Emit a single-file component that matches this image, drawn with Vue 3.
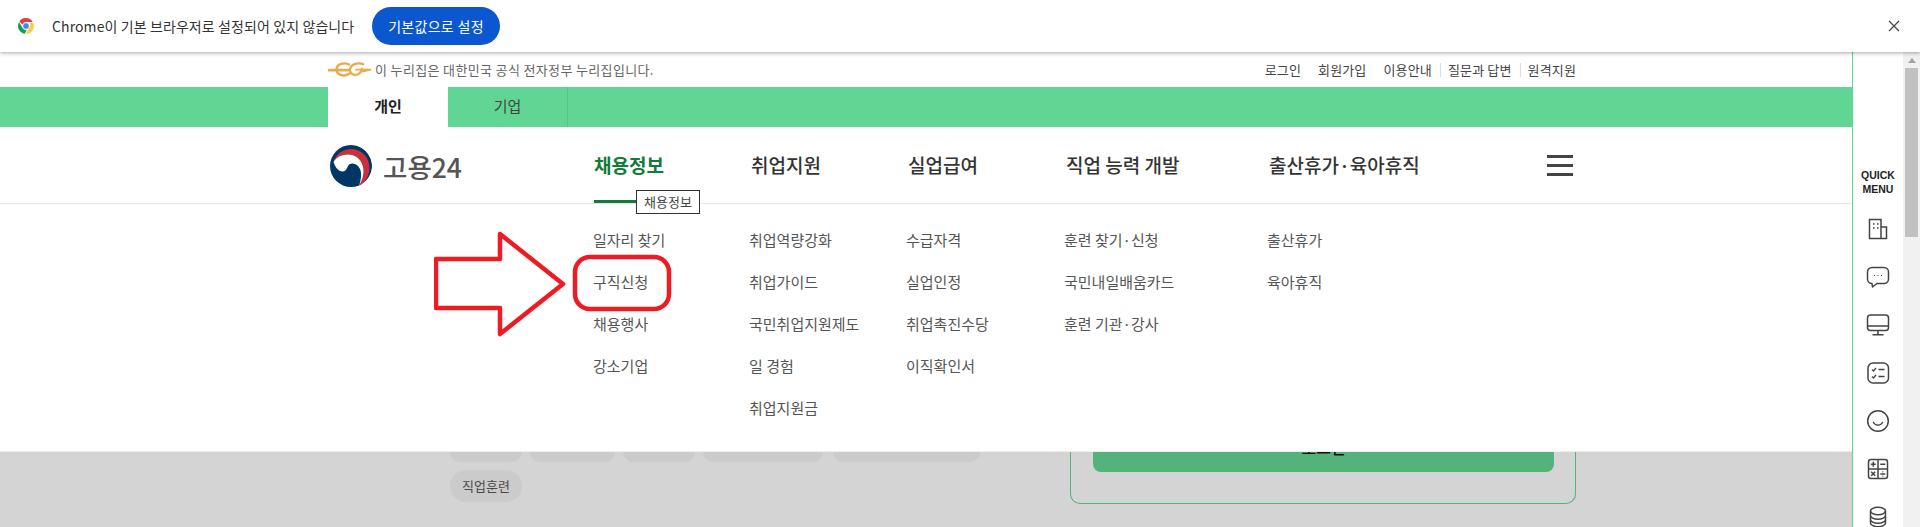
<script setup>
const links = ['로그인', '회원가입', '이용안내', '질문과 답변', '원격지원']
const columns = [
  { title: '채용정보', active: true, items: ['일자리 찾기', '구직신청', '채용행사', '강소기업'] },
  { title: '취업지원', items: ['취업역량강화', '취업가이드', '국민취업지원제도', '일 경험', '취업지원금'] },
  { title: '실업급여', items: ['수급자격', '실업인정', '취업촉진수당', '이직확인서'] },
  { title: '직업 능력 개발', items: ['훈련 찾기·신청', '국민내일배움카드', '훈련 기관·강사'] },
  { title: '출산휴가·육아휴직', items: ['출산휴가', '육아휴직'] }
]
const hiddenChips = [72, 85, 72, 120, 147]
</script>

<template>
  <div class="root">
    <div class="infobar">
      <svg class="chrome" viewBox="0 0 48 48" width="18" height="18">
        <path fill="#db4437" d="M24 3a21 21 0 0 1 18.200 10.500H24a10.500 10.500 0 0 0-9.900 7L6.500 11.200A21 21 0 0 1 24 3z" />
        <path fill="#0f9d58" d="M5.500 13.500l9.300 15.800A10.500 10.500 0 0 0 26 34.300l-5.300 10.400A21 21 0 0 1 5.500 13.500z" />
        <path fill="#ffcd40" d="M43 15a21 21 0 0 1-20 30l9.200-16A10.500 10.500 0 0 0 32.500 15z" />
        <circle cx="24" cy="24" r="8.500" fill="#4285f4" stroke="#fff" stroke-width="1.500" />
      </svg>
      <span class="info-text">Chrome이 기본 브라우저로 설정되어 있지 않습니다</span>
      <button class="default-btn">기본값으로 설정</button>
      <svg class="close" viewBox="0 0 12 12" width="12" height="12">
        <path d="M1 1l10 10M11 1L1 11" stroke="#444" stroke-width="1.2" fill="none" />
      </svg>
    </div>

    <div class="main">
      <div class="page">
        <div class="wrap gov">
          <svg class="eg" viewBox="0 0 44 16" width="44" height="16">
            <g fill="none" stroke="#e9ac4c" stroke-width="2.400" stroke-linecap="round">
              <path d="M1 8.200h19" stroke-width="2.800" />
              <path d="M21 2.500C16 .2 9 1.600 8.600 7c-.4 6 7 8.400 13 4.400" />
              <path d="M35 2.200C30 .2 22.500 2 22 7.500c-.4 6.600 9.500 8 12-.5" />
              <path d="M28 7.600h15l-9 2" stroke-width="1.800" />
            </g>
          </svg>
          <span class="gov-text">이 누리집은 대한민국 공식 전자정부 누리집입니다.</span>
          <div class="links">
            <a v-for="(l, i) in links" :key="l" class="link" :class="{ sep: i >= 3 }">{{ l }}</a>
          </div>
        </div>

        <div class="tabbar">
          <div class="wrap tabs">
            <div class="tab on">개인</div>
            <div class="tab">기업</div>
          </div>
        </div>

        <header class="header">
          <div class="wrap head-row">
            <div class="brand">
              <svg class="emblem" viewBox="0 0 42 42" width="42" height="42">
                <circle cx="21" cy="21" r="21" fill="#003764" />
                <path fill="#fff" d="M28 1.200A21 21 0 0 1 29 40.500L30 42h12V0H28z" />
                <path fill="#cd2e3a" d="M3.500 17C6 8.500 14 3.500 22 4c11 1 18 9.500 17.500 20-.5 7-4 13-10.500 17 3.500-6 5-11.500 4.500-16.500C32.500 15 26 9.500 18 9.500 11 9.500 6 12.500 3.500 17z" />
                <path fill="#fff" d="M3.500 17C6 12.500 11 9.500 18 9.500c8 0 14.500 5.500 15.500 15 .4 5-1 10.500-4.500 16.500 2-6 3-12.500 1-17-2-4.500-6.500-7-10.500-4.800C17 21 17 26.500 12.500 26.500 8.500 26.500 5 22 3.500 17z" />
              </svg>
              <span class="wordmark">고용24</span>
            </div>
            <nav class="cols nav-cols">
              <a v-for="c in columns" :key="c.title" class="nav-item" :class="{ active: c.active }">
                {{ c.title }}
                <span v-if="c.active" class="tip">{{ c.title }}</span>
              </a>
            </nav>
            <div class="burger"><i></i><i></i><i></i></div>
          </div>
        </header>

        <section class="dropdown">
          <div class="wrap drop-row">
            <div class="cols">
              <ul v-for="c in columns" :key="c.title" class="sub">
                <li v-for="it in c.items" :key="it">{{ it }}</li>
              </ul>
            </div>
          </div>
          <svg class="note" viewBox="0 0 250 110" width="250" height="110">
            <g fill="none" stroke="#ed1c24" stroke-width="4.500" stroke-linejoin="round">
              <path d="M2 28h64V3l63 50-63 50V77H2z" />
              <rect x="141" y="26" width="94" height="52" rx="15" />
            </g>
          </svg>
        </section>

        <section class="below">
          <div class="wrap below-row">
            <div class="chips">
              <div class="chip-stub-row">
                <span v-for="(w, i) in hiddenChips" :key="i" class="chip-stub" :style="{ width: w + 'px' }"></span>
              </div>
              <span class="chip">직업훈련</span>
            </div>
            <div class="card">
              <div class="card-btn"><span>로그인</span></div>
            </div>
          </div>
        </section>
      </div>

      <aside class="quick">
        <div class="quick-title">QUICK<br />MENU</div>
        <div class="quick-list">
          <svg viewBox="0 0 24 24" width="24" height="24">
            <g fill="none" stroke="#444" stroke-width="1.500">
              <path d="M3.500 2.500h11.500v19H3.500zM15 10h5.500v11.500H15" />
              <path d="M7 7h1.500M11 7h1.500M7 11h1.500M11 11h1.500" stroke-width="1.700" />
            </g>
          </svg>
          <svg viewBox="0 0 24 24" width="24" height="24">
            <g fill="none" stroke="#444" stroke-width="1.500" stroke-linejoin="round">
              <path d="M6 2.500h12a4.500 4.500 0 0 1 4.500 4.500v7a4.500 4.500 0 0 1-4.500 4.500H11L6.500 22l-.5-3.500A4.500 4.500 0 0 1 1.500 14V7A4.500 4.500 0 0 1 6 2.500z" />
              <path d="M8 10.500h1M11.500 10.500h1M15 10.500h1" stroke-width="1.200" />
            </g>
          </svg>
          <svg viewBox="0 0 24 24" width="24" height="24">
            <g fill="none" stroke="#444" stroke-width="1.500">
              <rect x="1.500" y="2" width="21" height="15.500" rx="3" />
              <path d="M1.500 13h21M12 17.500v4M6.500 21.700h11" />
            </g>
          </svg>
          <svg viewBox="0 0 24 24" width="24" height="24">
            <g fill="none" stroke="#444" stroke-width="1.500">
              <rect x="2" y="2" width="20.500" height="20" rx="5" />
              <path d="M6 8.500l1.500 1.500L10 7M6 15.500l1.500 1.500L10 14" stroke-width="1.300" />
              <path d="M12.500 8.500h6M12.500 15.500h6" />
            </g>
          </svg>
          <svg viewBox="0 0 24 24" width="24" height="24">
            <g fill="none" stroke="#444" stroke-width="1.500">
              <circle cx="12" cy="12" r="10.300" />
              <path d="M7.500 13.500c2 3.500 7 3.500 9 0" stroke-linecap="round" />
            </g>
          </svg>
          <svg viewBox="0 0 24 24" width="24" height="24">
            <g fill="none" stroke="#444" stroke-width="1.500">
              <rect x="2.500" y="2.500" width="19" height="19" rx="2.500" />
              <path d="M12 2.500v19M2.500 12h19" />
              <path d="M4.800 7.300h5M7.300 4.800v5M14.300 7.300h5M5.200 14.700l4 4M9.200 14.700l-4 4M14.300 17h5" />
              <path d="M16.800 14.500v.7M16.800 18.800v.7" />
            </g>
          </svg>
          <svg viewBox="0 0 24 24" width="24" height="24">
            <g fill="none" stroke="#444" stroke-width="1.500">
              <ellipse cx="12" cy="6" rx="7.500" ry="3.800" />
              <path d="M4.500 6v12c0 2.100 3.400 3.800 7.500 3.800s7.500-1.700 7.500-3.800V6M4.500 10.500c0 2.100 3.400 3.800 7.500 3.800s7.500-1.700 7.500-3.800M4.500 14.500c0 2.100 3.400 3.800 7.500 3.800s7.500-1.700 7.500-3.800" />
            </g>
          </svg>
        </div>
      </aside>

      <div class="scrollbar">
        <div class="arrow"></div>
        <div class="thumb"></div>
      </div>
    </div>
  </div>
</template>

<style>
html, body { margin: 0; background: #fff; overflow: hidden; }
</style>

<style scoped>
.root {
  width: 1920px;
  height: 527px;
  overflow: hidden;
  display: flex;
  flex-direction: column;
  font-family: "Noto Sans CJK KR", "Noto Sans", sans-serif;
  color: #555;
}
.infobar {
  height: 52px;
  flex: none;
  display: flex;
  align-items: center;
  background: #fff;
  box-shadow: 0 1px 4px rgba(0, 0, 0, 0.35);
  position: relative;
  z-index: 3;
  padding-left: 17px;
}
.chrome { flex: none; }
.info-text { margin-left: 17px; width: 303px; flex: none; white-space: nowrap; font-size: 14px; letter-spacing: 0.1px; color: #333; }
.default-btn {
  margin-left: 17px;
  width: 128px;
  height: 38px;
  border: 0;
  border-radius: 19px;
  background: #0b57d0;
  color: #fff;
  font: 14px "Noto Sans CJK KR", sans-serif;
  letter-spacing: 0.3px;
  padding: 0;
}
.close { margin-left: auto; margin-right: 20px; }

.main { flex: 1; display: flex; position: relative; min-height: 0; }
.page { width: 1903px; flex: none; display: flex; flex-direction: column; }
.wrap { margin-left: 328px; width: 1248px; }

.gov { height: 35px; flex: none; display: flex; align-items: center; }
.eg { flex: none; margin-top: 1px; }
.gov-text { margin-left: 3px; font-size: 13px; letter-spacing: 0.35px; color: #666; }
.links { margin-left: auto; display: flex; align-items: center; }
.link { font-size: 13px; letter-spacing: 0.15px; color: #444; margin-left: 17px; line-height: 16px; }
.link.sep { position: relative; margin-left: 16px; }
.link.sep::before {
  content: "";
  position: absolute;
  left: -8px;
  top: 1px;
  bottom: 1px;
  width: 1px;
  background: #ddd;
}

.tabbar { height: 40px; flex: none; background: #61d593; }
.tabs { display: flex; height: 100%; }
.tab {
  width: 120px;
  box-sizing: border-box;
  border-right: 1px solid #57c487;
  text-align: center;
  line-height: 38px;
  font-size: 15px;
  color: #444;
}
.tab.on { background: #fff; font-weight: 700; color: #222; border-right: 0; }

.header { height: 77px; flex: none; border-bottom: 1px solid #e6e6e6; box-sizing: border-box; }
.head-row { display: flex; height: 76px; }
.brand { width: 265px; flex: none; display: flex; align-items: center; padding-top: 2px; box-sizing: border-box; }
.emblem { flex: none; margin-left: 2px; }
.wordmark { margin-left: 11px; font-size: 26.500px; font-weight: 500; color: #555; }
.cols { display: grid; grid-template-columns: 156px 157px 158px 203px 1fr; flex: none; }
.nav-cols { width: 900px; grid-template-columns: 157px 157px 158px 203px 225px; }
.nav-item {
  position: relative;
  height: 76px;
  box-sizing: border-box;
  line-height: 76px;
  margin-left: 1px;
  font-size: 19px;
  font-weight: 500;
  color: #333;
  justify-self: start;
  border-bottom: 3px solid transparent;
  white-space: nowrap;
}
.nav-item.active { color: #127a3a; font-weight: 700; border-bottom-color: #127a3a; }
.tip {
  position: absolute;
  left: 42px;
  top: 63px;
  width: 64px;
  height: 24px;
  box-sizing: border-box;
  border: 1px solid #333;
  background: #fff;
  color: #444;
  font-size: 13px;
  font-weight: 400;
  line-height: 22px;
  text-align: center;
  z-index: 2;
}
.burger {
  width: 26px;
  display: flex;
  flex-direction: column;
  justify-content: center;
  gap: 6px;
  margin-left: auto;
  margin-right: 3px;
  padding-top: 1px;
}
.burger i { display: block; height: 3px; background: #444; }

.dropdown {
  height: 248px;
  flex: none;
  box-sizing: border-box;
  background: #fff;
  border-bottom: 1px solid #eee;
  position: relative;
}
.drop-row { padding: 15px 0 0 265px; box-sizing: border-box; }
.sub { list-style: none; margin: 0; padding: 0; }
.sub li { height: 42px; line-height: 42px; font-size: 15px; color: #555; white-space: nowrap; }
.note { position: absolute; left: 434px; top: 27px; }

.below { flex: 1; background: #d4d4d4; overflow: hidden; min-height: 0; }
.below-row { display: flex; }
.chips { width: 742px; flex: none; padding-left: 122px; box-sizing: border-box; }
.chip-stub-row { display: flex; gap: 8px; }
.chip-stub { height: 10px; background: #cbcbcb; border-radius: 0 0 16px 16px; }
.chip-stub:last-child { margin-left: 2px; }
.chip {
  display: block;
  width: 72px;
  height: 32px;
  margin-top: 8px;
  border-radius: 16px;
  background: #cbcbcb;
  color: #4a4a4a;
  font-size: 13px;
  line-height: 31px;
  text-align: center;
}
.card {
  width: 506px;
  height: 52px;
  flex: none;
  box-sizing: border-box;
  border: 1px solid #54b27b;
  border-top: 0;
  border-radius: 0 0 10px 10px;
  padding: 0 21px 0 22px;
}
.card-btn {
  height: 20px;
  background: #54b27b;
  border-radius: 0 0 8px 8px;
  display: flex;
  justify-content: center;
  overflow: hidden;
}
.card-btn span { font-size: 16px; font-weight: 500; color: #111; line-height: 24px; margin-top: -17px; height: 24px; }

.quick {
  position: absolute;
  right: 17px;
  top: 0;
  bottom: 0;
  width: 51px;
  box-sizing: border-box;
  border-left: 1px solid #61d593;
  background: #fff;
  text-align: center;
  overflow: hidden;
}
.quick-title {
  margin-top: 116px;
  font: 700 10.500px/14px "Liberation Sans", sans-serif;
  color: #222;
}
.quick-list {
  margin-top: 21px;
  display: flex;
  flex-direction: column;
  align-items: center;
  gap: 24px;
}
.quick-list svg { flex: none; }

.scrollbar { width: 17px; flex: none; background: #f1f1f1; }
.arrow {
  width: 0;
  height: 0;
  margin: 6px auto 0;
  border: 4px solid transparent;
  border-top: 0;
  border-bottom: 5px solid #a3a3a3;
}
.thumb { margin: 5px 2px 0; height: 169px; background: #c1c1c1; }
</style>
